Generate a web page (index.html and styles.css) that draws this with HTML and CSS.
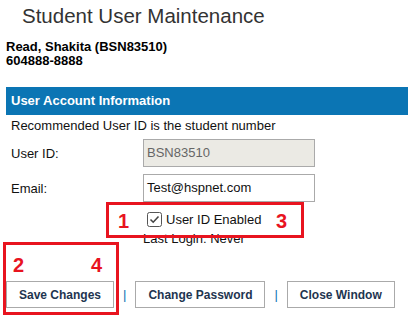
FILE: index.html
```html
<!DOCTYPE html>
<html>
<head>
<meta charset="utf-8">
<link rel="stylesheet" href="styles.css">
</head>
<body>
<div class="page">
  <h1 class="title">Student User Maintenance</h1>
  <div class="student">
    <div>Read, Shakita (BSN83510)</div>
    <div>604888-8888</div>
  </div>
  <div class="section-bar">User Account Information</div>
  <div class="section-body">
    <div class="note">Recommended User ID is the student number</div>
    <div class="row">
      <label class="lbl">User ID:</label>
      <div class="field disabled">BSN83510</div>
    </div>
    <div class="row">
      <label class="lbl">Email:</label>
      <div class="field">Test@hspnet.com</div>
    </div>
    <div class="check-row">
      <span class="cb"><svg width="15" height="15" viewBox="0 0 15 15"><rect x="0.5" y="0.5" width="14" height="14" rx="2" fill="#fff" stroke="#555"/><path d="M3.5 7.5 L6.2 10.2 L11.5 4.5" fill="none" stroke="#444" stroke-width="1.6"/></svg></span>
      <span>User ID Enabled</span>
    </div>
    <div class="last-login">Last Login: Never</div>
  </div>
  <div class="buttons">
    <button class="btn">Save Changes</button>
    <span class="sep">|</span>
    <button class="btn">Change Password</button>
    <span class="sep">|</span>
    <button class="btn">Close Window</button>
  </div>
</div>
<div class="anno anno1"><span class="num n1">1</span><span class="num n3">3</span></div>
<div class="anno anno2"><span class="num n2">2</span><span class="num n4">4</span></div>
</body>
</html>
```
FILE: styles.css
```css
html, body {
  margin: 0;
  padding: 0;
  background: #fff;
}
body {
  font-family: Arial, "Liberation Sans", sans-serif;
  font-size: 13px;
  color: #111;
  position: relative;
  width: 408px;
  height: 321px;
  overflow: hidden;
}
.page {
  padding-left: 6px;
}
.title {
  margin: 0;
  padding: 3px 0 0 16px;
  font-size: 20.5px;
  font-weight: normal;
  color: #333;
  line-height: 26px;
}
.student {
  margin-top: 11px;
  font-weight: bold;
  font-size: 13px;
  line-height: 14px;
  color: #000;
}
.section-bar {
  margin-top: 19px;
  height: 28px;
  line-height: 28px;
  background: #0b75b4;
  color: #fff;
  font-weight: bold;
  font-size: 13px;
  padding-left: 5px;
}
.section-body {
  padding-left: 5px;
}
.note {
  line-height: 17px;
  margin-top: 2px;
}
.row {
  display: flex;
  align-items: center;
  margin-top: 5px;
}
.row + .row {
  margin-top: 7px;
}
.lbl {
  width: 132px;
}
.field {
  width: 167px;
  height: 26px;
  border: 1px solid #aaa;
  line-height: 26px;
  padding-left: 3px;
  background: #fff;
}
.field.disabled {
  background: #ebeae4;
  color: #666;
}
.check-row {
  display: flex;
  align-items: center;
  margin-left: 136px;
  margin-top: 10px;
  height: 15px;
}
.cb {
  display: flex;
  margin-right: 4px;
}
.last-login {
  margin-left: 132px;
  margin-top: 5px;
  line-height: 14px;
}
.buttons {
  display: flex;
  align-items: center;
  margin-top: 35px;
}
.btn {
  flex: none;
  white-space: nowrap;
  font-family: Arial, "Liberation Sans", sans-serif;
  font-size: 12px;
  font-weight: bold;
  color: #1e3550;
  background: #fff;
  border: 1px solid #aaa;
  height: 27px;
  padding: 0 12px;
  border-radius: 0;
}
.sep {
  color: #0b75b4;
  margin: 0 9px;
}
.anno {
  position: absolute;
  border: 3px solid #e8141f;
  box-sizing: border-box;
}
.anno1 {
  left: 106px;
  top: 202px;
  width: 198px;
  height: 36px;
}
.anno2 {
  left: 3px;
  top: 242px;
  width: 116px;
  height: 73px;
}
.num {
  position: absolute;
  color: #e8141f;
  font-weight: bold;
  font-size: 20px;
  line-height: 20px;
}
.n1 { left: 9px; top: 6px; }
.n3 { left: 167px; top: 6px; }
.n2 { left: 7px; top: 10px; }
.n4 { left: 85px; top: 10px; }
```
